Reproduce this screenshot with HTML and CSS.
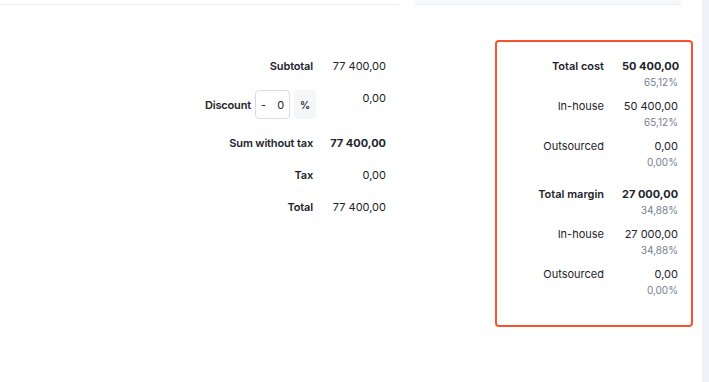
FILE: index.html
```html
<!DOCTYPE html>
<html lang="en">
<head>
  <meta charset="UTF-8" />
  <meta name="viewport" content="width=device-width, initial-scale=1" />
  <title>Offer summary</title>
  <link rel="stylesheet" href="styles.css">
</head>
<body>

  <div class="page">
    <div class="top-row">
      <div class="top-line"></div>
      <div class="top-panel"></div>
    </div>

    <div class="content">
      <div class="totals">
        <div class="label">Subtotal</div>
        <div class="value">77 400,00</div>

        <div class="label discount">
          Discount
          <div class="discount-input"><span>-</span><span>0</span></div>
          <div class="unit">%</div>
        </div>
        <div class="value">0,00</div>

        <div class="label">Sum without tax</div>
        <div class="value strong">77 400,00</div>

        <div class="label">Tax</div>
        <div class="value">0,00</div>

        <div class="label">Total</div>
        <div class="value">77 400,00</div>
      </div>

      <div class="margin-box">
        <div class="item">
          <div class="label">Total cost</div>
          <div class="value strong">50 400,00</div>
          <div class="pct">65,12%</div>
        </div>
        <div class="item">
          <div class="label normal">In-house</div>
          <div class="value">50 400,00</div>
          <div class="pct">65,12%</div>
        </div>
        <div class="item">
          <div class="label normal">Outsourced</div>
          <div class="value">0,00</div>
          <div class="pct">0,00%</div>
        </div>
        <div class="item group">
          <div class="label">Total margin</div>
          <div class="value strong">27 000,00</div>
          <div class="pct">34,88%</div>
        </div>
        <div class="item">
          <div class="label normal">In-house</div>
          <div class="value">27 000,00</div>
          <div class="pct">34,88%</div>
        </div>
        <div class="item">
          <div class="label normal">Outsourced</div>
          <div class="value">0,00</div>
          <div class="pct">0,00%</div>
        </div>
      </div>
    </div>
  </div>

  <div class="scrollbar"></div>

</body>
</html>
```

FILE: styles.css
```css
body {
  margin: 0;
  font-family: Inter, "Noto Sans", sans-serif;
  font-size: 11px;
  line-height: 16px;
  color: #22232b;
  background: #fff;
  display: flex;
  height: 382px;
  overflow: hidden;
}
.page {
  width: 702px;
}
.scrollbar {
  width: 7px;
  background: #eef1f8;
}
.top-row {
  display: flex;
  height: 5px;
}
.top-line {
  width: 399px;
  height: 4px;
  border-bottom: 1px solid #eceff5;
}
.top-panel {
  margin-left: 16px;
  width: 266px;
  height: 4px;
  background: #f6f7fb;
  border-bottom: 1px solid #eceff5;
}
.content {
  display: flex;
  align-items: flex-start;
}
.totals {
  width: 386px;
  margin-top: 53px;
  display: grid;
  grid-template-columns: max-content 56px;
  column-gap: 17px;
  row-gap: 16px;
  justify-content: end;
  align-items: start;
}
.label {
  text-align: right;
  font-weight: 600;
}
.totals .label {
  letter-spacing: -0.15px;
}
.value {
  text-align: right;
  white-space: nowrap;
}
.strong {
  font-weight: 700;
}
.discount {
  display: flex;
  align-items: center;
  justify-content: flex-end;
  gap: 4px;
  margin-right: -3px;
}
.discount-input {
  width: 35px;
  height: 29px;
  box-sizing: border-box;
  border: 1px solid #d7dae2;
  border-radius: 4px;
  display: flex;
  align-items: center;
  justify-content: space-between;
  padding: 0 5px;
  font-weight: 400;
}
.unit {
  width: 22px;
  height: 29px;
  background: #f5f6fa;
  border-radius: 4px;
  display: flex;
  align-items: center;
  justify-content: center;
  font-weight: 600;
  font-size: 10px;
}
.margin-box {
  margin-left: 109px;
  margin-top: 35px;
  width: 198px;
  height: 287px;
  box-sizing: border-box;
  border: 2px solid #f4532f;
  border-radius: 4px;
  padding: 16px 13px 0 0;
}
.item {
  display: grid;
  grid-template-columns: 1fr 56px;
  column-gap: 18px;
  margin-bottom: 8px;
}
.item.group {
  margin-top: 16px;
}
.item .normal {
  font-weight: 400;
}
.pct {
  grid-column: 2;
  text-align: right;
  color: #767d92;
  font-size: 10px;
}
```
